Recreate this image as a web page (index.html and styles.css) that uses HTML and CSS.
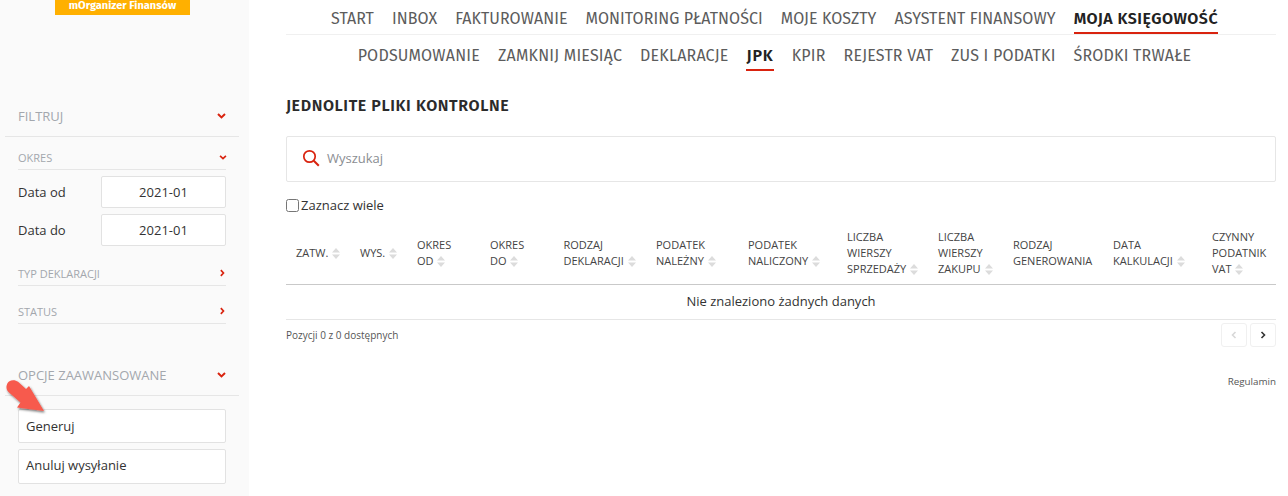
FILE: index.html
```html
<!DOCTYPE html>
<html lang="pl">
<head>
<meta charset="utf-8">
<title>Jednolite Pliki Kontrolne</title>
<link rel="stylesheet" href="styles.css">
</head>
<body>
<svg class="defs" width="0" height="0" aria-hidden="true">
  <symbol id="down" viewBox="0 0 9 6"><path d="M1 1l3.5 3.4L8 1" fill="none" stroke="#d9230f" stroke-width="2"/></symbol>
  <symbol id="right" viewBox="0 0 6 9"><path d="M1 1l3.2 3.5L1 8" fill="none" stroke="#d9230f" stroke-width="2"/></symbol>
  <symbol id="sort" viewBox="0 0 8 11"><path d="M4 0l4 4.4H0zM4 11L0 6.600h8z" fill="#dcdcdc"/></symbol>
</svg>
<div class="app">
  <aside class="sidebar">
    <div class="logo">mOrganizer Finansów</div>
    <div class="section filter-head"><span>FILTRUJ</span><svg class="chev-d"><use href="#down"/></svg></div>
    <div class="sub"><span>OKRES</span><svg class="chev-s"><use href="#down"/></svg></div>
    <div class="field"><label>Data od</label><div class="date">2021-01</div></div>
    <div class="field"><label>Data do</label><div class="date">2021-01</div></div>
    <div class="sub sub-typ"><span>TYP DEKLARACJI</span><svg class="chev-r"><use href="#right"/></svg></div>
    <div class="sub sub-status"><span>STATUS</span><svg class="chev-r"><use href="#right"/></svg></div>
    <div class="section adv-head"><span>OPCJE ZAAWANSOWANE</span><svg class="chev-d"><use href="#down"/></svg></div>
    <button class="btn btn-first">Generuj</button>
    <button class="btn btn-next">Anuluj wysyłanie</button>
    <svg class="arrow" viewBox="0 0 46 40" width="46" height="40">
      <defs><filter id="sh" x="-20%" y="-20%" width="150%" height="150%"><feDropShadow dx="1" dy="1.500" stdDeviation="1.200" flood-color="#000" flood-opacity=".55"/></filter></defs>
      <path d="M6 4.500C9 2.500 12.500 3 15 4.800L23 12l3-3L41 34 14 30.500l3.500-5L5.500 15C2.500 12 3 7 6 4.500z" fill="#f75a4d" filter="url(#sh)"/>
    </svg>
  </aside>
  <main class="main">
    <nav class="nav nav-top">
      <a>START</a><a>INBOX</a><a>FAKTUROWANIE</a><a>MONITORING PŁATNOŚCI</a><a>MOJE KOSZTY</a><a>ASYSTENT FINANSOWY</a><a class="active">MOJA KSIĘGOWOŚĆ</a>
    </nav>
    <nav class="nav nav-sub">
      <a>PODSUMOWANIE</a><a>ZAMKNIJ MIESIĄC</a><a>DEKLARACJE</a><a class="active">JPK</a><a>KPIR</a><a>REJESTR VAT</a><a>ZUS I PODATKI</a><a>ŚRODKI TRWAŁE</a>
    </nav>
    <h1 class="title">JEDNOLITE PLIKI KONTROLNE</h1>
    <div class="search">
      <svg width="18" height="18" viewBox="0 0 18 18"><circle cx="7.500" cy="7.500" r="5.700" fill="none" stroke="#d9230f" stroke-width="1.700"/><path d="M11.800 11.800l5 5" stroke="#d9230f" stroke-width="2"/></svg>
      <span>Wyszukaj</span>
    </div>
    <label class="check"><input type="checkbox"><span>Zaznacz wiele</span></label>
    <table class="grid">
      <colgroup>
        <col class="c1"><col class="c2"><col class="c3"><col class="c4"><col class="c5"><col class="c6"><col class="c7"><col class="c8"><col class="c9"><col class="c10"><col class="c11"><col class="c12">
      </colgroup>
      <thead>
        <tr>
          <th>ZATW. <svg class="sort"><use href="#sort"/></svg></th>
          <th>WYS. <svg class="sort"><use href="#sort"/></svg></th>
          <th>OKRES<br>OD <svg class="sort"><use href="#sort"/></svg></th>
          <th>OKRES<br>DO <svg class="sort"><use href="#sort"/></svg></th>
          <th>RODZAJ<br>DEKLARACJI <svg class="sort"><use href="#sort"/></svg></th>
          <th>PODATEK<br>NALEŻNY <svg class="sort"><use href="#sort"/></svg></th>
          <th>PODATEK<br>NALICZONY <svg class="sort"><use href="#sort"/></svg></th>
          <th>LICZBA<br>WIERSZY<br>SPRZEDAŻY <svg class="sort"><use href="#sort"/></svg></th>
          <th>LICZBA<br>WIERSZY<br>ZAKUPU <svg class="sort"><use href="#sort"/></svg></th>
          <th>RODZAJ<br>GENEROWANIA</th>
          <th>DATA<br>KALKULACJI <svg class="sort"><use href="#sort"/></svg></th>
          <th>CZYNNY<br>PODATNIK<br>VAT <svg class="sort"><use href="#sort"/></svg></th>
        </tr>
      </thead>
      <tbody>
        <tr><td colspan="12">Nie znaleziono żadnych danych</td></tr>
      </tbody>
    </table>
    <div class="foot">
      <span class="info">Pozycji 0 z 0 dostępnych</span>
      <div class="pager">
        <button class="page off"><svg width="6" height="8" viewBox="0 0 6 8"><path d="M4.500 1L1.500 4l3 3" fill="none" stroke="#d8d8d8" stroke-width="1.600"/></svg></button>
        <button class="page"><svg width="6" height="8" viewBox="0 0 6 8"><path d="M1.500 1l3 3-3 3" fill="none" stroke="#333" stroke-width="1.600"/></svg></button>
      </div>
    </div>
    <div class="terms">Regulamin</div>
  </main>
</div>
</body>
</html>
```
FILE: styles.css
```css
* { box-sizing: border-box; }
html, body { margin: 0; height: 496px; overflow: hidden; background: #fff; }
body { font-family: "Open Sans", sans-serif; color: #333; font-size: 13px; }
.defs { position: absolute; }
.app { display: flex; height: 496px; }

.sidebar { position: relative; width: 249px; flex: none; background: #fafafa; height: 100%; }
.logo { margin-left: 55px; width: 135px; height: 15px; background: #ffb000; color: #fff; font: 700 11px/11px "Fira Sans", "Lato", sans-serif; text-align: center; }

.section { display: flex; justify-content: space-between; align-items: center; margin-left: 5px; width: 234px; padding: 0 13px; border-bottom: 1px solid #e6e6e6; color: #a3a7ad; font-size: 13px; }
.filter-head { margin-top: 91px; height: 31px; padding-bottom: 10px; }
.adv-head { margin-top: 29px; height: 43px; padding-top: 2px; }
.chev-d { width: 9px; height: 6px; }
.chev-s { width: 8px; height: 5px; margin-right: -1px; }
.chev-r { width: 5px; height: 8px; margin-right: 1px; }

.sub { display: flex; justify-content: space-between; align-items: center; margin-left: 18px; width: 208px; border-bottom: 1px solid #e6e6e6; color: #a3a7ad; font-size: 11px; height: 33px; padding-top: 9px; }
.sub-typ { margin-top: 7px; padding-top: 8px; }
.sub-status { margin-top: 5px; padding-top: 8px; }

.field { display: flex; align-items: center; justify-content: space-between; margin: 6px 0 0 18px; width: 208px; height: 32px; font-size: 13px; color: #333; }
.date { width: 125px; height: 32px; line-height: 30px; text-align: center; background: #fff; border: 1px solid #e2e2e2; border-radius: 2px; }

.btn { display: block; margin: 6px 0 0 18px; width: 208px; height: 35px; padding: 0 0 0 7px; text-align: left; background: #fff; border: 1px solid #e2e2e2; border-radius: 2px; font: 13px "Open Sans", sans-serif; color: #333; }
.btn-first { margin-top: 13px; height: 34px; }
.btn-next { padding-bottom: 3px; }
.arrow { position: absolute; left: 3px; top: 377px; }

.main { margin-left: 37px; width: 990px; flex: none; }
.nav { display: flex; justify-content: center; gap: 18px; font: 16px "Fira Sans", "Lato", sans-serif; color: #5c5c5c; padding-right: 13px; }
.nav a { display: block; white-space: nowrap; }
.nav .active { font-weight: 600; color: #222; border-bottom: 2px solid #d9230f; }
.nav-top { height: 35px; border-bottom: 1px solid #f0f0f0; padding-top: 9px; letter-spacing: .06px; }
.nav-top a { height: 25px; line-height: 19px; }
.nav-top .active { letter-spacing: .47px; }
.nav-sub { height: 36px; padding-top: 10px; letter-spacing: .2px; }
.nav-sub a { height: 26px; line-height: 22px; }
.nav-sub .active { letter-spacing: .9px; }

.title { margin: 25px 0 0; font: 600 16px/20px "Fira Sans", "Lato", sans-serif; color: #2b2b2b; letter-spacing: .6px; height: 20px; }
.search { display: flex; align-items: center; gap: 7px; margin-top: 20px; height: 46px; padding: 0 14px 2px 15px; border: 1px solid #e6e6e6; border-radius: 2px; color: #8a8d92; font-size: 13px; }
.check { display: flex; align-items: center; margin-top: 15px; height: 16px; font-size: 13px; }
.check input { margin: 0 2px 0 0; width: 13px; height: 13px; }

.grid { margin-top: 7px; width: 990px; border-collapse: collapse; table-layout: fixed; }
.c1 { width: 64px; } .c2 { width: 57px; } .c3 { width: 73px; } .c4 { width: 73.500px; } .c5 { width: 92.500px; } .c6 { width: 92px; }
.c7 { width: 99px; } .c8 { width: 91px; } .c9 { width: 75px; } .c10 { width: 100px; } .c11 { width: 99px; } .c12 { width: 74px; }
.grid th { padding: 9px 0 7px 10px; font-weight: 400; font-size: 11px; line-height: 16px; text-align: left; color: #444; border-bottom: 1px solid #c9c9c9; white-space: nowrap; }
.grid td { height: 35px; text-align: center; font-size: 13px; color: #333; border-bottom: 1px solid #e6e6e6; padding: 0 0 2px; }
.sort { width: 8px; height: 11px; vertical-align: -2px; margin-left: 1px; }

.foot { display: flex; justify-content: space-between; align-items: flex-start; margin-top: 3px; }
.info { font-size: 10px; line-height: 24px; color: #555; }
.pager { display: flex; gap: 3px; }
.page { width: 26px; height: 24px; padding: 0; background: #fff; border: 1px solid #f0f0f0; border-radius: 3px; display: flex; align-items: center; justify-content: center; }
.terms { margin-top: 28px; text-align: right; font-size: 9.800px; line-height: 14px; color: #555; }
```
